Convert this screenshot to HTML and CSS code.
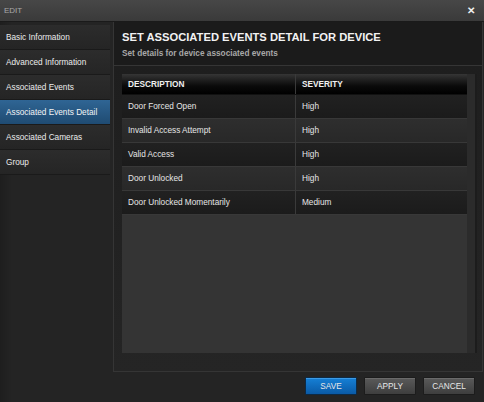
FILE: index.html
```html
<!DOCTYPE html>
<html>
<head>
<meta charset="utf-8">
<link rel="stylesheet" href="styles.css">
</head>
<body>
<div class="dialog">
  <div class="titlebar">
    <span class="title">EDIT</span>
    <span class="close">&#x2715;</span>
  </div>
  <div class="main">
    <nav class="sidebar">
      <div class="nav-item">Basic Information</div>
      <div class="nav-item">Advanced Information</div>
      <div class="nav-item">Associated Events</div>
      <div class="nav-item active">Associated Events Detail</div>
      <div class="nav-item">Associated Cameras</div>
      <div class="nav-item">Group</div>
    </nav>
    <section class="panel">
      <header class="panel-head">
        <h1>SET ASSOCIATED EVENTS DETAIL FOR DEVICE</h1>
        <p>Set details for device associated events</p>
      </header>
      <div class="panel-body">
        <div class="grid-wrap">
          <div class="grid">
            <div class="row head">
              <div class="cell c1">DESCRIPTION</div>
              <div class="cell c2">SEVERITY</div>
            </div>
            <div class="row odd"><div class="cell c1">Door Forced Open</div><div class="cell c2">High</div></div>
            <div class="row even"><div class="cell c1">Invalid Access Attempt</div><div class="cell c2">High</div></div>
            <div class="row odd"><div class="cell c1">Valid Access</div><div class="cell c2">High</div></div>
            <div class="row even"><div class="cell c1">Door Unlocked</div><div class="cell c2">High</div></div>
            <div class="row odd"><div class="cell c1">Door Unlocked Momentarily</div><div class="cell c2">Medium</div></div>
            <div class="grid-empty"></div>
          </div>
          <div class="scrolltrack"></div>
        </div>
      </div>
    </section>
  </div>
  <footer class="footer">
    <button class="btn primary">SAVE</button>
    <button class="btn">APPLY</button>
    <button class="btn">CANCEL</button>
  </footer>
</div>
</body>
</html>
```

FILE: styles.css
```css
html, body {
  margin: 0;
  padding: 0;
  background: #232323;
}
body {
  width: 484px;
  height: 402px;
  overflow: hidden;
  font-family: "Liberation Sans", Arial, sans-serif;
  font-size: 8.25px;
  color: #e6e6e6;
}
.dialog {
  display: flex;
  flex-direction: column;
  width: 484px;
  height: 402px;
  background: linear-gradient(to right, #1e1e1e 0px, #242424 12px, #242424 100%);
}
.titlebar {
  height: 21px;
  flex: none;
  display: flex;
  align-items: center;
  justify-content: space-between;
  padding: 0 9px 0 4px;
  background: linear-gradient(#474747, #3a3a3a);
  border-bottom: 1px solid #1a1a1a;
}
.title {
  color: #a9a9a9;
  font-size: 8px;
}
.close {
  color: #f0f0f0;
  font-size: 10px;
  font-weight: bold;
}
.main {
  display: flex;
  height: 350px;
  flex: none;
}
.sidebar {
  width: 110px;
  margin-top: 3px;
  margin-right: 3px;
  flex: none;
}
.nav-item {
  height: 24px;
  line-height: 25px;
  padding-left: 6px;
  border-bottom: 1px solid #1a1a1a;
  background: linear-gradient(#2c2c2c, #252525);
  color: #ececec;
}
.nav-item.active {
  background: linear-gradient(#2f6594, #1f4b72);
  color: #f4f4f4;
}
.panel {
  width: 368px;
  flex: none;
  border-left: 1px solid #353535;
  border-right: 1px solid #353535;
  border-bottom: 1px solid #353535;
  display: flex;
  flex-direction: column;
  background: #222;
}
.panel-head {
  height: 43px;
  flex: none;
  background: #1b1b1b;
  border-bottom: 1px solid #353535;
  padding-left: 8px;
}
.panel-head h1 {
  margin: 9px 0 0 0;
  font-size: 11.2px;
  line-height: 13px;
  font-weight: bold;
  color: #f2f2f2;
}
.panel-head p {
  margin: 5px 0 0 0;
  font-size: 8.25px;
  font-weight: bold;
  color: #a8a8a8;
}
.panel-body {
  flex: 1;
  padding: 8px 5px 18px 8px;
  display: flex;
  background: linear-gradient(#1e1e1e, #252525);
}
.grid-wrap {
  flex: 1;
  display: flex;
  border-right: 2px solid #1c1c1c;
}
.grid {
  flex: 1;
  display: flex;
  flex-direction: column;
  background: #343434;
}
.scrolltrack {
  width: 8px;
  background: #2b2b2b;
}
.row {
  display: flex;
  height: 23px;
  flex: none;
  border-bottom: 1px solid #383838;
}
.row.head {
  height: 20px;
  border-bottom: 1px solid #111;
  background: linear-gradient(#353535, #0a0a0a 60%, #000);
  font-weight: bold;
  color: #f0f0f0;
}
.row.odd {
  background: linear-gradient(#212121, #1b1b1b);
}
.row.even {
  background: linear-gradient(#2e2e2e, #282828);
}
.cell {
  display: flex;
  align-items: center;
  padding-left: 6px;
}
.c1 {
  width: 167px;
  border-right: 1px solid #3a3a3a;
}
.c2 {
  flex: 1;
}
.grid-empty {
  flex: 1;
}
.footer {
  flex: 1;
  display: flex;
  justify-content: flex-end;
  align-items: flex-start;
  padding: 5px 9px 0 0;
  gap: 6px;
}
.btn {
  width: 52px;
  height: 18px;
  padding: 0;
  font-family: "Liberation Sans", Arial, sans-serif;
  font-size: 8.25px;
  color: #e8e8e8;
  border: 1px solid #1c1c1c;
  border-radius: 1px;
  background: linear-gradient(#5a5a5a, #3e3e3e);
  box-shadow: inset 0 1px 0 #6a6a6a;
}
.btn + .btn {
  margin-left: 1px;
}
.btn.primary {
  border-color: #0d2a45;
  background: linear-gradient(#1680d6, #0a5aa6);
  box-shadow: inset 0 1px 0 #3b9ae6;
}
```
